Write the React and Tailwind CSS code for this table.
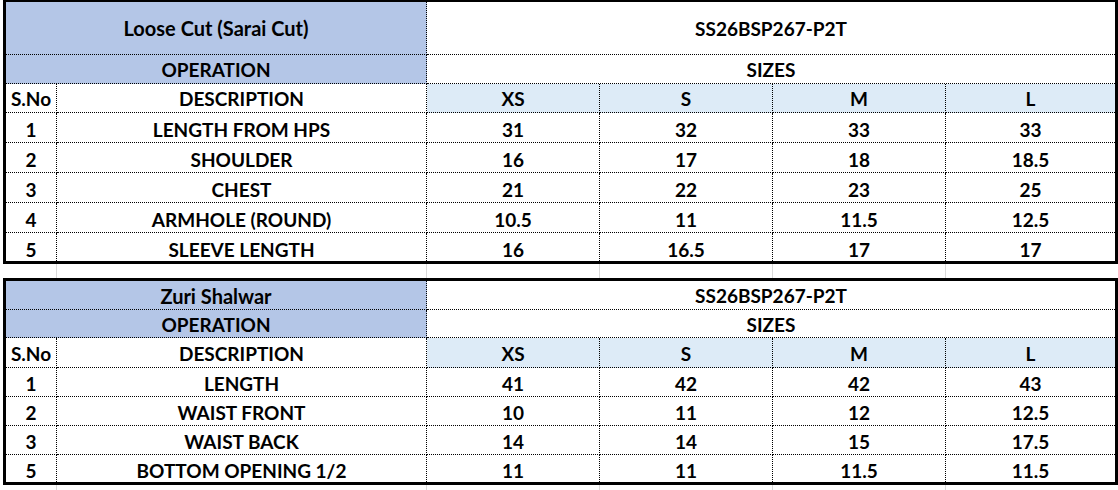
import React from "react";

const COLS = "grid grid-cols-[51px_370px_173px_173px_173px_169px]";
const DOT = "border-dotted border-black";

function Cell({ children, className = "", right = true, bottom = true }) {
  return (
    <div
      className={`flex items-center justify-center ${DOT} ${right ? "border-r" : ""} ${bottom ? "border-b" : ""} ${className}`}
    >
      {children}
    </div>
  );
}

function SizeTable({ title, code, rows, h }) {
  const sizeBg = "bg-[#ddebf7]";
  const blue = "bg-[#b4c6e7]";
  return (
    <div className={`${COLS} border-x-[3px] border-b-[3px] border-black ${h.top}`}>
      <Cell className={`col-span-2 ${blue} ${h.title}`}>{title}</Cell>
      <Cell className={`col-span-4 bg-white ${h.title}`} right={false}>{code}</Cell>
      <Cell className={`col-span-2 ${blue} ${h.op}`}>OPERATION</Cell>
      <Cell className={`col-span-4 bg-white ${h.op}`} right={false}>SIZES</Cell>
      <Cell className={`bg-white ${h.head}`}>S.No</Cell>
      <Cell className={`bg-white ${h.head}`}>DESCRIPTION</Cell>
      <Cell className={`${sizeBg} ${h.head}`}>XS</Cell>
      <Cell className={`${sizeBg} ${h.head}`}>S</Cell>
      <Cell className={`${sizeBg} ${h.head}`}>M</Cell>
      <Cell className={`${sizeBg} ${h.head}`} right={false}>L</Cell>
      {rows.map((r, i) => {
        const last = i === rows.length - 1;
        const hc = last ? h.last : h.row;
        return (
          <React.Fragment key={i}>
            {r.map((v, j) => (
              <Cell key={j} className={`bg-white ${hc}`} right={j < 5} bottom={!last}>
                {v}
              </Cell>
            ))}
          </React.Fragment>
        );
      })}
    </div>
  );
}

function GridGap({ className }) {
  const g = "border-r border-[#d9d9d9]";
  return (
    <div className={`${COLS} pl-[3px] ${className}`}>
      <div className={g}></div>
      <div className={g}></div>
      <div className={g}></div>
      <div className={g}></div>
      <div className={g}></div>
      <div></div>
    </div>
  );
}

export default function App() {
  const t1 = [
    ["1", "LENGTH FROM HPS", "31", "32", "33", "33"],
    ["2", "SHOULDER", "16", "17", "18", "18.5"],
    ["3", "CHEST", "21", "22", "23", "25"],
    ["4", "ARMHOLE (ROUND)", "10.5", "11", "11.5", "12.5"],
    ["5", "SLEEVE LENGTH", "16", "16.5", "17", "17"],
  ];
  const t2 = [
    ["1", "LENGTH", "41", "42", "42", "43"],
    ["2", "WAIST FRONT", "10", "11", "12", "12.5"],
    ["3", "WAIST BACK", "14", "14", "15", "17.5"],
    ["5", "BOTTOM OPENING 1/2", "11", "11", "11.5", "11.5"],
  ];
  return (
    <div className="w-[1118px] h-[490px] bg-white pl-[3px] overflow-hidden font-[Lato,sans-serif] font-bold text-[19px] text-black leading-none">
      <SizeTable
        title={<span className="text-[20px]">Loose Cut (Sarai Cut)</span>}
        code="SS26BSP267-P2T"
        rows={t1}
        h={{ top: "border-t-2", title: "h-[53px]", op: "h-[29px]", head: "h-[29px]", row: "h-[30px] pt-[4px]", last: "h-[28px] pt-[5px]" }}
      />
      <GridGap className="h-[14px]" />
      <SizeTable
        title={<span className="text-[20px]">Zuri Shalwar</span>}
        code="SS26BSP267-P2T"
        rows={t2}
        h={{ top: "border-t-[3px]", title: "h-[29px] pt-[1px]", op: "h-[28px] pt-[1px]", head: "h-[30px] pt-[1px]", row: "h-[29px] pt-[3px]", last: "h-[27px] pt-[4px]" }}
      />
      <GridGap className="h-[8px]" />
    </div>
  );
}
